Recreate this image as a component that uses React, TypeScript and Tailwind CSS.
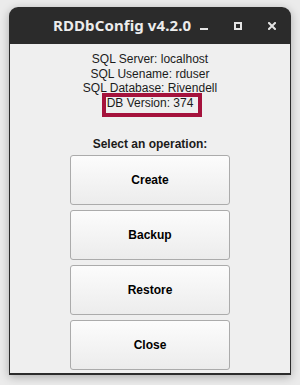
import React from 'react';

const info = [
  'SQL Server: localhost',
  'SQL Usename: rduser',
  'SQL Database: Rivendell',
];

const operations = ['Create', 'Backup', 'Restore', 'Close'];

function TitleBar() {
  return (
    <div className="h-[37px] flex items-center bg-[#2b2b2b] rounded-t-[9px] pl-[44px] pr-[15px]">
      <span className="text-[#ececec] font-bold text-[15px] tracking-[0.1px]" style={{ fontFamily: '"Noto Sans", sans-serif' }}>
        RDDbConfig v4.2.0
      </span>
      <div className="ml-auto flex items-center gap-[26px]">
        {/* minimize */}
        <svg width="8" height="8" viewBox="0 0 8 8">
          <rect x="0" y="6" width="8" height="2" fill="#e4e4e4" />
        </svg>
        {/* maximize */}
        <svg width="8" height="8" viewBox="0 0 8 8">
          <rect x="1" y="1" width="6" height="6" fill="none" stroke="#e4e4e4" strokeWidth="2" />
        </svg>
        {/* close */}
        <svg width="8" height="8" viewBox="0 0 8 8">
          <path d="M1 1L7 7M7 1L1 7" stroke="#e4e4e4" strokeWidth="2" strokeLinecap="square" />
        </svg>
      </div>
    </div>
  );
}

export default function App() {
  return (
    <div className="w-[300px] h-[385px] bg-[#ebebeb] pt-[7px] pl-[9px] overflow-hidden">
      <div className="w-[282px] h-[368px] flex flex-col rounded-t-[9px] shadow-[0_2px_10px_rgba(0,0,0,0.28)]">
        <TitleBar />
        <div
          className="flex-1 bg-[#efefef] border-x border-b-2 border-[#2b2b2b] flex flex-col items-center pt-[8px] text-[12px] text-[#1b1b1b]"
          style={{ fontFamily: '"Liberation Sans", Arial, sans-serif' }}
        >
          {info.map((line) => (
            <div key={line} className="leading-[14.5px]">{line}</div>
          ))}
          <div className="relative leading-[15px] mt-[0.5px]">
            DB Version: 374
            <div className="absolute left-[-5px] top-[-3px] w-[100px] h-[24px] border-4 border-[#a5123c]" />
          </div>

          <div className="font-bold leading-[15px] mt-[26px]">Select an operation:</div>

          <div className="flex flex-col gap-[5px] mt-[3px]">
            {operations.map((op) => (
              <button
                key={op}
                className="w-[160px] h-[50px] rounded-[3px] border border-[#ababab] bg-gradient-to-b from-[#fcfcfc] to-[#ececec] font-bold text-[12px] text-black"
              >
                {op}
              </button>
            ))}
          </div>
        </div>
      </div>
    </div>
  );
}
